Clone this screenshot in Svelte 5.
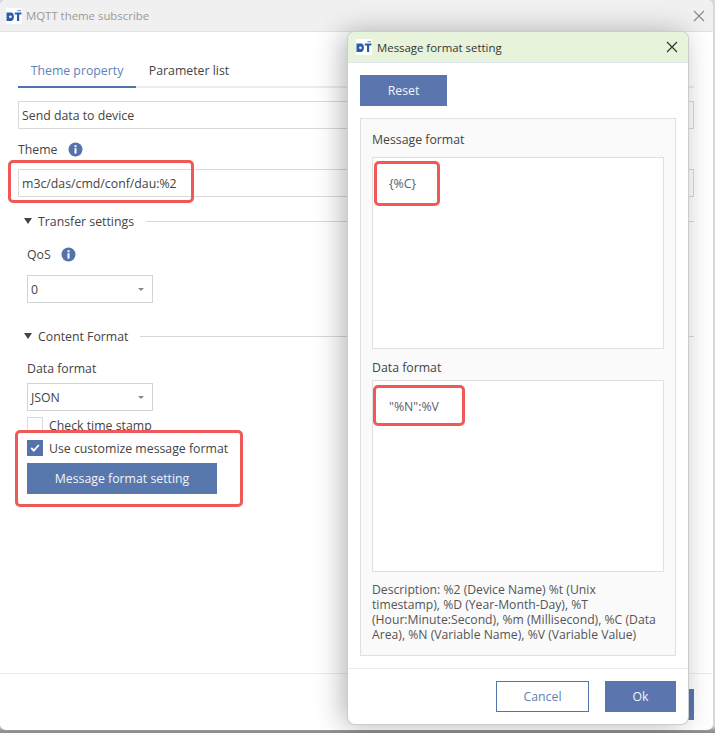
<script>
  const tabs = ['Theme property', 'Parameter list'];
</script>

{#snippet logo()}
  <svg class="logo" width="16" height="16" viewBox="0 0 16 16" aria-hidden="true">
    <rect width="16" height="16" fill="#fff" />
    <path d="M0.5 4.5h5.4a4.2 4.2 0 0 1 2 4.2 4.2 4.2 0 0 1-2 4.2H0.5z" fill="#2a5caa" />
    <circle cx="4.4" cy="8.7" r="1.3" fill="#fff" />
    <path d="M8.8 4.5H15.5v2H13.2v6.4H11V6.5H8.8z" fill="#2a5caa" />
    <path d="M11.5 2h3.5v1.2h-3.5z" fill="#6f9ad8" />
  </svg>
{/snippet}

{#snippet info()}
  <svg class="info" width="15" height="15" viewBox="0 0 15 15" aria-hidden="true">
    <circle cx="7.5" cy="7.5" r="7" fill="#5572ad" />
    <rect x="6.5" y="6.2" width="2" height="5.4" fill="#fff" />
    <rect x="6.5" y="3.2" width="2" height="2" fill="#fff" />
  </svg>
{/snippet}

{#snippet closeIcon(color)}
  <svg width="12" height="12" viewBox="0 0 12 12" aria-hidden="true">
    <path d="M1 1l10 10M11 1L1 11" stroke={color} stroke-width="1.2" fill="none" />
  </svg>
{/snippet}

<div class="screen">
  <section class="main">
    <header class="main-title">
      {@render logo()}
      <span>MQTT theme subscribe</span>
      <span class="main-close">{@render closeIcon('#8a8a8a')}</span>
    </header>

    <div class="main-body">
      <div class="tabs">
        {#each tabs as tab, i}
          <div class="tab" class:active={i === 0}>{tab}</div>
        {/each}
      </div>

      <div class="field first">Send data to device</div>

      <div class="label theme-label">Theme {@render info()}</div>
      <div class="field">m3c/das/cmd/conf/dau:%2</div>

      <div class="section-head transfer">
        <span class="tri"></span><span>Transfer settings</span><span class="rule"></span>
      </div>

      <div class="indent">
        <div class="label qos">QoS {@render info()}</div>
        <div class="select"><span>0</span><span class="caret"></span></div>
      </div>

      <div class="section-head content">
        <span class="tri"></span><span>Content Format</span><span class="rule"></span>
      </div>

      <div class="indent">
        <div class="label dataformat">Data format</div>
        <div class="select"><span>JSON</span><span class="caret"></span></div>
        <div class="check one"><span class="box"></span><span>Check time stamp</span></div>
        <div class="check two">
          <span class="box on">
            <svg width="10" height="8" viewBox="0 0 10 8" aria-hidden="true"><path d="M1.2 4l2.6 2.6L8.8 1" stroke="#fff" stroke-width="1.8" fill="none" /></svg>
          </span>
          <span>Use customize message format</span>
        </div>
        <button class="btn wide">Message format setting</button>
      </div>
    </div>

    <footer class="main-foot">
      <button class="btn main-ok" aria-label="Ok"></button>
    </footer>
  </section>

  <section class="dialog">
    <header class="dlg-title">
      {@render logo()}
      <span>Message format setting</span>
      <span class="dlg-close">{@render closeIcon('#333')}</span>
    </header>
    <div class="dlg-body">
      <button class="btn reset">Reset</button>
      <div class="panel">
        <div class="panel-label">Message format</div>
        <div class="area msg"><span>&#123;%C&#125;</span></div>
        <div class="panel-label second">Data format</div>
        <div class="area data"><span>"%N":%V</span></div>
        <p class="desc">Description: %2 (Device Name) %t (Unix timestamp), %D (Year-Month-Day), %T (Hour:Minute:Second), %m (Millisecond), %C (Data Area), %N (Variable Name), %V (Variable Value)</p>
      </div>
    </div>
    <footer class="dlg-foot">
      <button class="btn cancel">Cancel</button>
      <button class="btn ok">Ok</button>
    </footer>
  </section>

  <span class="mark m-theme"></span>
  <span class="mark m-check"></span>
  <span class="mark m-msg"></span>
  <span class="mark m-data"></span>
</div>

<style>
  :global(body) {
    margin: 0;
    background: #fff;
  }
  .screen {
    position: relative;
    width: 715px;
    height: 733px;
    overflow: hidden;
    background: linear-gradient(to bottom, #d8d8d8 0, #d8d8d8 726px, #8f8f8f 731px);
    font-family: "Open Sans", "Noto Sans", sans-serif;
    font-size: 12.3px;
    color: #444;
  }
  .main {
    position: absolute;
    left: 0;
    top: 0;
    width: 713px;
    height: 730px;
    background: #fff;
    border-radius: 6px 6px 6px 6px;
    display: flex;
    flex-direction: column;
    overflow: hidden;
  }
  .main-title {
    height: 32px;
    flex: none;
    box-sizing: border-box;
    background: #f0f0f0;
    border-bottom: 1px solid #e2e2e2;
    display: flex;
    align-items: center;
    gap: 4px;
    padding: 0 8px 0 6px;
    color: #999;
    font-size: 11.4px;
  }
  .main-close {
    margin-left: auto;
    display: flex;
  }
  .main-body {
    flex: 1;
    padding: 0 18px;
  }
  .tabs {
    display: flex;
    height: 56px;
    border-bottom: 2px solid #ececec;
    box-sizing: border-box;
    padding-top: 30px;
    width: 676px;
  }
  .tab {
    width: 106px;
    box-sizing: border-box;
    text-align: center;
    margin-bottom: -2px;
    height: 26px;
  }
  .tab.active {
    width: 118px;
    color: #5f82b8;
    border-bottom: 2px solid #5172ad;
  }
  .field {
    height: 28px;
    box-sizing: border-box;
    border: 1px solid #d9d9d9;
    background: #fff;
    padding-left: 3px;
    line-height: 27px;
    width: 676px;
  }
  .field.first {
    margin-top: 13px;
  }
  .label {
    display: flex;
    align-items: center;
    gap: 10px;
  }
  .theme-label {
    height: 22px;
    margin-top: 9px;
    margin-bottom: 9px;
  }
  .section-head {
    display: flex;
    align-items: center;
    padding-left: 6px;
    gap: 6px;
    height: 20px;
    width: 670px;
  }
  .section-head .rule {
    flex: 1;
    height: 1px;
    background: #d8d8d8;
    margin-left: 6px;
  }
  .transfer {
    margin-top: 14px;
  }
  .content {
    margin-top: 23px;
  }
  .tri {
    width: 0;
    height: 0;
    border-left: 4.5px solid transparent;
    border-right: 4.5px solid transparent;
    border-top: 6px solid #444;
  }
  .indent {
    padding-left: 9px;
  }
  .qos {
    margin-top: 13px;
    height: 20px;
    margin-bottom: 11px;
  }
  .dataformat {
    margin-top: 12px;
    height: 20px;
    margin-bottom: 5px;
  }
  .select {
    width: 126px;
    height: 28px;
    box-sizing: border-box;
    border: 1px solid #d4d4d4;
    background: #fff;
    display: flex;
    align-items: center;
    justify-content: space-between;
    padding: 0 8px 0 3px;
  }
  .caret {
    width: 0;
    height: 0;
    border-left: 3px solid transparent;
    border-right: 3px solid transparent;
    border-top: 3.5px solid #888;
  }
  .check {
    display: flex;
    align-items: center;
    gap: 6px;
    height: 16px;
  }
  .check.one {
    margin-top: 6px;
  }
  .check.two {
    margin-top: 7px;
  }
  .box {
    width: 16px;
    height: 16px;
    box-sizing: border-box;
    border: 1px solid #d9d9d9;
    background: #fff;
    display: flex;
    align-items: center;
    justify-content: center;
  }
  .box.on {
    background: #5572ad;
    border-color: #5572ad;
  }
  .btn {
    font: inherit;
    border: none;
    background: #5877ac;
    color: #f2f4f8;
    padding: 0;
  }
  .btn.wide {
    display: block;
    width: 190px;
    height: 31px;
    margin-top: 7px;
  }
  .main-foot {
    height: 57px;
    flex: none;
    box-sizing: border-box;
    border-top: 1px solid #e9ecf0;
    display: flex;
    justify-content: flex-end;
    padding: 15px 19px 0 0;
  }
  .btn.main-ok {
    width: 71px;
    height: 31px;
    background: #5b76ae;
  }
  .dialog {
    position: absolute;
    left: 348px;
    top: 32px;
    width: 340px;
    height: 692px;
    background: #fff;
    border-radius: 7px;
    box-shadow: 0 0 0 1px #c9cdd0, -5px 1px 28px rgba(0, 0, 0, 0.3);
    display: flex;
    flex-direction: column;
    overflow: hidden;
  }
  .dlg-title {
    height: 31px;
    flex: none;
    box-sizing: border-box;
    background: #e7f3da;
    border-bottom: 1px solid #dfe6ee;
    display: flex;
    align-items: center;
    gap: 5px;
    padding: 0 10px 0 8px;
    color: #333;
    font-size: 11.4px;
  }
  .dlg-close {
    margin-left: auto;
    display: flex;
  }
  .dlg-body {
    flex: 1;
    padding: 12px;
    min-height: 0;
  }
  .btn.reset {
    display: block;
    width: 87px;
    height: 31px;
    background: #5b76ae;
  }
  .panel {
    margin-top: 12px;
    height: 538px;
    box-sizing: border-box;
    border: 1px solid #e0e0e0;
    background: #fafafa;
    padding: 12px 11px;
  }
  .panel-label {
    height: 20px;
    line-height: 18px;
  }
  .panel-label.second {
    margin-top: 10px;
  }
  .area {
    border: 1px solid #e0e0e0;
    background: #fff;
    box-sizing: border-box;
    width: 292px;
    padding-left: 16px;
    color: #55606e;
  }
  .area.msg {
    height: 192px;
    margin-top: 6px;
    padding-top: 17px;
  }
  .area.data {
    height: 192px;
    padding-top: 17px;
    margin-top: 1px;
  }
  .desc {
    margin: 10px 0 0;
    line-height: 15px;
    font-size: 12.2px;
    color: #555;
  }
  .dlg-foot {
    height: 56px;
    flex: none;
    border-top: 1px solid #e9ecf0;
    display: flex;
    justify-content: flex-end;
    align-items: flex-start;
    gap: 16px;
    padding: 12px 12px 0;
    box-sizing: border-box;
  }
  .btn.cancel {
    width: 93px;
    height: 31px;
    background: #fff;
    border: 1px solid #5572ad;
    box-sizing: border-box;
    color: #5f82b8;
  }
  .btn.ok {
    width: 71px;
    height: 31px;
    background: #5b76ae;
  }
  .mark {
    position: absolute;
    border: 3px solid #ef5a58;
    border-radius: 5px;
    box-sizing: border-box;
  }
  .m-theme { left: 8px; top: 160px; width: 186px; height: 43px; }
  .m-check { left: 15px; top: 430px; width: 228px; height: 77px; }
  .m-msg { left: 374px; top: 161px; width: 66px; height: 45px; }
  .m-data { left: 373px; top: 385px; width: 92px; height: 41px; }
</style>
